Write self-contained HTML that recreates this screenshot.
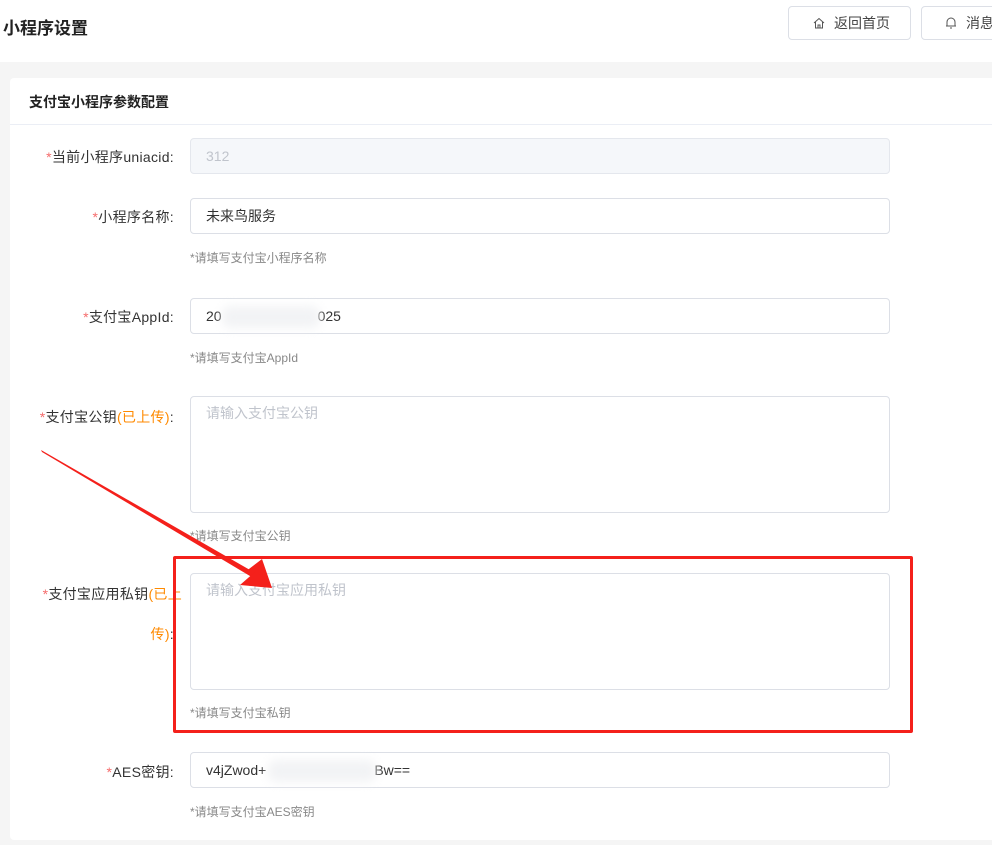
<!DOCTYPE html>
<html><head><meta charset="utf-8"><style>
*{box-sizing:border-box;margin:0;padding:0}
body{width:992px;height:845px;overflow:hidden;background:#f5f5f5;font-family:"Liberation Sans","Noto Sans CJK SC",sans-serif;position:relative;color:#333}
.top{position:absolute;left:0;top:0;width:992px;height:62px;background:#fff}
.title{position:absolute;left:3px;top:14px;font-size:17px;color:#222;font-weight:bold}
.btn{position:absolute;top:6px;height:34px;border:1px solid #dcdfe6;border-radius:4px;background:#fff;font-size:14px;color:#444;line-height:32px;padding-left:24px}
.card{position:absolute;left:10px;top:78px;width:990px;height:762px;background:#fff;border-radius:4px}
.ch{height:47px;border-bottom:1px solid #ebeef5;font-size:14px;font-weight:bold;padding:14px 0 0 19px;color:#222}
.lab{position:absolute;right:818px;font-size:14px;color:#333;text-align:right;white-space:nowrap;letter-spacing:0.3px}
.lab b{color:#f56c6c;font-weight:normal}
.lab i{font-style:normal;color:#ff8a00}
.inp{position:absolute;left:190px;width:700px;height:36px;border:1px solid #dcdfe6;border-radius:4px;font-size:14px;padding:0 15px;line-height:34px;color:#333;background:#fff}
.ta{height:117px;line-height:20px;padding-top:6px;color:#c0c4cc}
.hint{position:absolute;left:190px;font-size:12px;color:#888}
.blur{position:absolute;background:#f2f3f5;filter:blur(5px);border-radius:8px}
</style></head><body>
<div class="top"><div class="title">小程序设置</div>
<div class="btn" style="left:788px;width:123px;padding-left:45px"><svg style="position:absolute;left:24px;top:10px" width="12" height="12" viewBox="0 0 12 12"><path d="M1 6L6 1.5 11 6M2.5 5v6h7V5M5 11V8h2v3" fill="none" stroke="#555" stroke-width="1"/></svg>返回首页</div>
<div class="btn" style="left:921px;width:90px;padding-left:44px"><svg style="position:absolute;left:23px;top:9px" width="12" height="14" viewBox="0 0 12 14"><path d="M2 10V6a4 4 0 0 1 8 0v4H2M1 10h10M5 12h2" fill="none" stroke="#555"/></svg>消息</div>
</div>
<div class="card"><div class="ch">支付宝小程序参数配置</div></div>
<div class="lab" style="top:147px"><b>*</b>当前小程序uniacid:</div>
<div class="inp" style="top:138px;background:#f5f7fa;border-color:#e4e7ed;color:#c0c4cc">312</div>
<div class="lab" style="top:207px"><b>*</b>小程序名称:</div>
<div class="inp" style="top:198px">未来鸟服务</div>
<div class="hint" style="top:249px">*请填写支付宝小程序名称</div>
<div class="lab" style="top:307px"><b>*</b>支付宝AppId:</div>
<div class="inp" style="top:298px">20<span style="display:inline-block;width:96px"></span>025</div>
<div class="blur" style="left:222px;top:306px;width:98px;height:22px"></div>
<div class="hint" style="top:349px">*请填写支付宝AppId</div>
<div class="lab" style="top:407px"><b>*</b>支付宝公钥<i>(已上传)</i>:</div>
<div class="inp ta" style="top:396px">请输入支付宝公钥</div>
<div class="hint" style="top:527px">*请填写支付宝公钥</div>
<div class="lab" style="top:584px;right:810px"><b>*</b>支付宝应用私钥<i>(已上</i></div>
<div class="lab" style="top:624px"><i>传)</i>:</div>
<div class="inp ta" style="top:573px">请输入支付宝应用私钥</div>
<div class="hint" style="top:704px">*请填写支付宝私钥</div>
<div class="lab" style="top:762px"><b>*</b>AES密钥:</div>
<div class="inp" style="top:752px">v4jZwod+<span style="display:inline-block;width:108px"></span>Bw==</div>
<div class="blur" style="left:268px;top:760px;width:108px;height:22px"></div>
<div class="hint" style="top:803px">*请填写支付宝AES密钥</div>
<div style="position:absolute;left:173px;top:556px;width:740px;height:177px;border:3px solid #f4201b;border-radius:2px"></div>
<svg style="position:absolute;left:0;top:0" width="992" height="845"><polygon points="41,450 42,452 255,579 257,574" fill="#f4201b"/><polygon points="272,588 245,572 262,559" fill="#f4201b"/><polygon points="272,588 240,585 256,571" fill="#f4201b"/></svg>
</body></html>
